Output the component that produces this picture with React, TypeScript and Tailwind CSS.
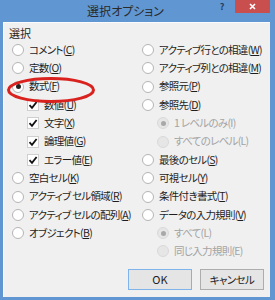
import React from "react";

type Item = {
  pre: string;
  key?: string;
  post?: string;
  kind: "radio" | "check";
  checked?: boolean;
  disabled?: boolean;
  indent?: boolean;
};

function Radio({ checked, disabled }: { checked?: boolean; disabled?: boolean }) {
  return (
    <span
      className={`flex h-[12px] w-[12px] shrink-0 items-center justify-center rounded-full border ${
        disabled ? "border-[#d9d9d9] bg-[#e6e6e6]" : "border-[#b5b5b5] bg-white"
      }`}
    >
      {checked && (
        <span className={`h-[5px] w-[5px] rounded-full ${disabled ? "bg-[#a8a8a8]" : "bg-[#222]"}`} />
      )}
    </span>
  );
}

function Check() {
  return (
    <span className="flex h-[12px] w-[12px] shrink-0 items-center justify-center border border-[#cfcfcf] bg-white">
      <svg width="10" height="10" viewBox="0 0 10 10">
        <path d="M1.5 5.2 L4 7.8 L8.6 2" fill="none" stroke="#111" strokeWidth="1.8" />
      </svg>
    </span>
  );
}

function Row({ item }: { item: Item }) {
  return (
    <div className={`flex h-[18.3px] items-center ${item.indent ? "pl-[15px]" : ""}`}>
      {item.kind === "radio" ? <Radio checked={item.checked} disabled={item.disabled} /> : <Check />}
      <span
        className={`ml-[5px] whitespace-nowrap text-[10.5px] leading-none tracking-[-0.7px] [font-feature-settings:'palt'] ${
          item.disabled ? "text-[#a3a3a3]" : "text-[#1e1e1e]"
        }`}
      >
        {item.pre}
        {item.key && (item.disabled ? item.key : <span className="underline underline-offset-[1px]">{item.key}</span>)}
        {item.post ?? ""}
      </span>
    </div>
  );
}

const left: Item[] = [
  { pre: "コメント(", key: "C", post: ")", kind: "radio" },
  { pre: "定数(", key: "O", post: ")", kind: "radio" },
  { pre: "数式(", key: "F", post: ")", kind: "radio", checked: true },
  { pre: "数値(", key: "U", post: ")", kind: "check", indent: true },
  { pre: "文字(", key: "X", post: ")", kind: "check", indent: true },
  { pre: "論理値(", key: "G", post: ")", kind: "check", indent: true },
  { pre: "エラー値(", key: "E", post: ")", kind: "check", indent: true },
  { pre: "空白セル(", key: "K", post: ")", kind: "radio" },
  { pre: "アクティブ セル領域(", key: "R", post: ")", kind: "radio" },
  { pre: "アクティブ セルの配列(", key: "A", post: ")", kind: "radio" },
  { pre: "オブジェクト(", key: "B", post: ")", kind: "radio" },
];

const right: Item[] = [
  { pre: "アクティブ行との相違(", key: "W", post: ")", kind: "radio" },
  { pre: "アクティブ列との相違(", key: "M", post: ")", kind: "radio" },
  { pre: "参照元(", key: "P", post: ")", kind: "radio" },
  { pre: "参照先(", key: "D", post: ")", kind: "radio" },
  { pre: "1 レベルのみ(I)", kind: "radio", indent: true, disabled: true, checked: true },
  { pre: "すべてのレベル(L)", kind: "radio", indent: true, disabled: true },
  { pre: "最後のセル(", key: "S", post: ")", kind: "radio" },
  { pre: "可視セル(", key: "Y", post: ")", kind: "radio" },
  { pre: "条件付き書式(", key: "T", post: ")", kind: "radio" },
  { pre: "データの入力規則(", key: "V", post: ")", kind: "radio" },
  { pre: "すべて(L)", kind: "radio", indent: true, disabled: true, checked: true },
  { pre: "同じ入力規則(E)", kind: "radio", indent: true, disabled: true },
];

export default function App() {
  return (
    <div className="relative flex h-[300px] w-[275px] flex-col bg-[#6096d2] font-['Meiryo_UI','Noto_Sans_CJK_JP',sans-serif]">
      <div className="flex h-[22px] items-start">
        <div className="flex h-[22px] flex-1 items-center justify-center pl-[35px] text-[12px] text-[#2a2a2a] [font-feature-settings:'palt']">
          選択オプション
        </div>
        <div className="flex h-[12px] w-[12px] items-center justify-center text-[9px] font-bold leading-none text-[#1f3f66]">?</div>
        <div className="ml-[7px] mr-[5px] flex h-[13px] w-[35px] items-center justify-center bg-[#c94f4f]">
          <svg width="7" height="7" viewBox="0 0 7 7">
            <path d="M1 1 L6 6 M6 1 L1 6" stroke="#fff" strokeWidth="1.6" />
          </svg>
        </div>
      </div>
      <div className="mb-[3px] ml-[3px] mr-[5px] flex flex-1 flex-col border-l border-t border-[#fbfbfb] bg-[#f0f0f0]">
        <div className="pl-[5px] pt-[4px] text-[11px] leading-[12px] text-[#1e1e1e]">選択</div>
        <div className="mt-[2px] grid grid-cols-[130px_1fr] pl-[8px]">
          <div className="flex flex-col">
            {left.map((it, i) => (
              <Row key={i} item={it} />
            ))}
          </div>
          <div className="flex flex-col">
            {right.map((it, i) => (
              <Row key={i} item={it} />
            ))}
          </div>
        </div>
        <div className="mt-auto mb-[7px] flex justify-end gap-[8px] pr-[6px]">
          <button className="flex h-[21px] w-[64px] items-center justify-center border border-[#7eb4ea] bg-[#e5e5e5] text-[11px] text-[#1e1e1e]">
            OK
          </button>
          <button className="flex h-[21px] w-[64px] items-center justify-center border border-[#adadad] bg-[#e5e5e5] text-[10.5px] tracking-[-0.6px] text-[#1e1e1e] [font-feature-settings:'palt']">
            キャンセル
          </button>
        </div>
      </div>
      <svg className="pointer-events-none absolute left-[6px] top-[76px]" width="90" height="28" viewBox="0 0 90 28">
        <ellipse cx="45" cy="14" rx="42.5" ry="11.5" fill="none" stroke="#d9211d" strokeWidth="3" />
      </svg>
    </div>
  );
}
